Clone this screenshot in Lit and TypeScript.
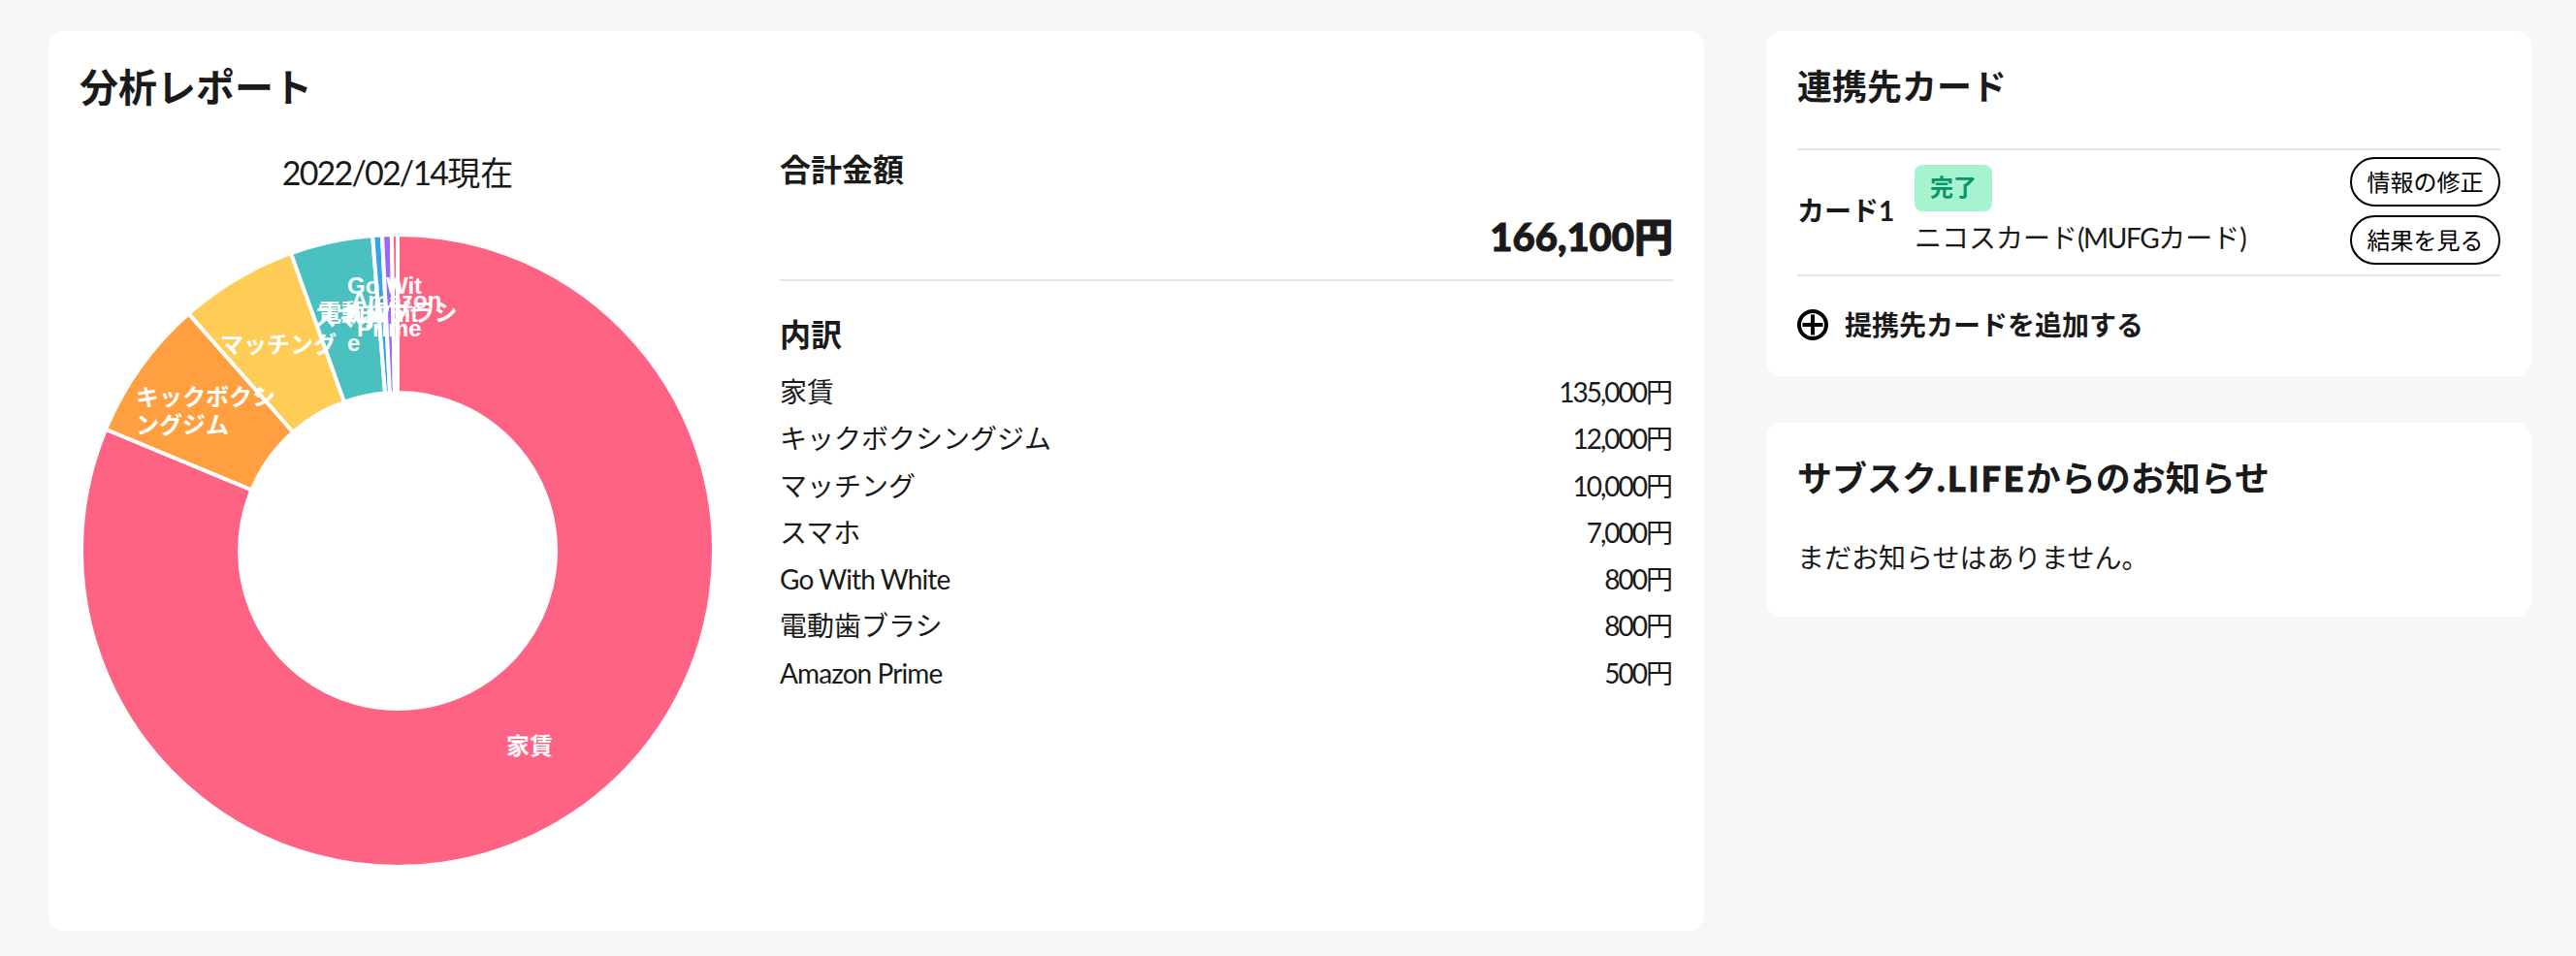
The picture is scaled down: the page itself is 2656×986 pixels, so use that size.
import { LitElement, html, css, svg } from "lit";
import { customElement } from "lit/decorators.js";

const ROWS: [string, number, boolean][] = [
  ["家賃", 135000, false],
  ["キックボクシングジム", 12000, false],
  ["マッチング", 10000, false],
  ["スマホ", 7000, false],
  ["Go With White", 800, true],
  ["電動歯ブラシ", 800, false],
  ["Amazon Prime", 500, true],
];
const COLORS = ["#ff6384", "#ff9f40", "#ffcd56", "#4bc0c0", "#36a2eb", "#9966ff", "#ff6384"];
const TOTAL = 166100;
const CX = 328, CY = 326, RO = 326, RI = 163;

function pt(r: number, a: number) {
  return [CX + r * Math.sin(a), CY - r * Math.cos(a)];
}
function slice(from: number, to: number) {
  const a0 = (from / TOTAL) * Math.PI * 2;
  const a1 = (to / TOTAL) * Math.PI * 2;
  const large = a1 - a0 > Math.PI ? 1 : 0;
  const [x0, y0] = pt(RO, a0), [x1, y1] = pt(RO, a1), [x2, y2] = pt(RI, a1), [x3, y3] = pt(RI, a0);
  return `M${x0} ${y0}A${RO} ${RO} 0 ${large} 1 ${x1} ${y1}L${x2} ${y2}A${RI} ${RI} 0 ${large} 0 ${x3} ${y3}Z`;
}

// chart label lines: [text, page x of start, page y of centre], relative to the chart box at (82,242)
const LABELS: [string, number, number][] = [
  ["家賃", 522, 769],
  ["キックボクシ", 140, 409],
  ["ングジム", 140, 438],
  ["マッチング", 227, 355],
  ["スマホ", 323, 327],
  ["Go Wit", 358, 294],
  ["h Whit", 358, 323],
  ["e", 358, 353],
  ["電動歯ブラシ", 328, 322],
  ["Amazon", 362, 309],
  ["Prime", 368, 338],
];

@customElement("app-root")
export class AppRoot extends LitElement {
  static styles = css`
    :host {
      display: block;
      min-height: 986px;
      background: #f7f7f7;
      color: #1a1a1a;
      font-family: Lato, "Noto Sans CJK JP", sans-serif;
      box-sizing: border-box;
    }
    .page {
      display: flex;
      align-items: flex-start;
      gap: 64px;
      padding: 32px 46px 26px 50px;
    }
    .card {
      background: #fff;
      border-radius: 16px;
      box-sizing: border-box;
    }
    .report {
      width: 1707px;
      height: 928px;
      padding: 0 32px;
    }
    .report h1 {
      margin: 0;
      font-size: 40px;
      line-height: 56px;
      padding-top: 30px;
      font-weight: 700;
    }
    .report-body {
      display: flex;
      gap: 66px;
    }
    .chart {
      width: 656px;
      flex: none;
    }
    .date {
      margin-top: 40px;
      height: 40px;
      line-height: 40px;
      text-align: center;
      font-size: 34px;
    }
    .date span {
      letter-spacing: -1.8px;
    }
    .chart svg {
      display: block;
      margin-top: 44px;
    }
    .chart text {
      font-family: "Liberation Sans", "Noto Sans CJK JP", sans-serif;
      font-size: 24px;
      font-weight: 700;
      fill: #fff;
      dominant-baseline: central;
    }
    .summary {
      flex: 1;
      min-width: 0;
    }
    .summary h2 {
      margin: 0;
      font-size: 32px;
      line-height: 44px;
      font-weight: 700;
    }
    .summary .sum-title {
      padding-top: 35px;
    }
    .sum-total {
      text-align: right;
      font-size: 40px;
      font-weight: 900;
      -webkit-text-stroke: 1px #1a1a1a;
      line-height: 56px;
      margin-top: 19px;
      padding-bottom: 16px;
      border-bottom: 2px solid #e5e5e5;
    }
    .summary .sum-detail {
      padding: 33px 0 13px;
    }
    .row {
      display: flex;
      justify-content: space-between;
      font-size: 28px;
      line-height: 48.3px;
    }
    .num {
      letter-spacing: -2px;
    }
    .latin {
      letter-spacing: -0.9px;
    }
    .side {
      width: 789px;
      display: flex;
      flex-direction: column;
      gap: 48px;
    }
    .side h2 {
      margin: 0;
      font-size: 36px;
      font-weight: 700;
      line-height: 50px;
    }
    .side h2 span {
      font-weight: 900;
      -webkit-text-stroke: 0.8px #1a1a1a;
      letter-spacing: 2.5px;
    }
    .link {
      height: 356px;
      padding: 32px 32px 0;
    }
    .link-list {
      margin-top: 39px;
      border-top: 2px solid #e5e5e5;
      border-bottom: 2px solid #e5e5e5;
      height: 128px;
      box-sizing: content-box;
      display: flex;
      align-items: center;
    }
    .card-name {
      width: 121px;
      flex: none;
      font-size: 28px;
      font-weight: 700;
      padding-bottom: 6px;
    }
    .card-info {
      flex: 1;
      display: flex;
      flex-direction: column;
      align-items: flex-start;
      gap: 7px;
      padding-bottom: 3px;
      font-size: 28px;
      line-height: 40px;
    }
    .card-info .latin {
      letter-spacing: -1.4px;
    }
    .badge {
      width: 80px;
      height: 48px;
      line-height: 46px;
      text-align: center;
      background: #a7f3d0;
      color: #059669;
      border-radius: 8px;
      font-size: 24px;
      font-weight: 700;
    }
    .actions {
      display: flex;
      flex-direction: column;
      gap: 9px;
      padding-bottom: 3px;
    }
    .btn {
      width: 155px;
      height: 51px;
      box-sizing: border-box;
      border: 2px solid #000;
      border-radius: 26px;
      background: #fff;
      color: #000;
      font: inherit;
      font-size: 24px;
      line-height: 1;
      padding: 0;
    }
    .add {
      display: flex;
      align-items: center;
      gap: 17px;
      margin-top: 34px;
      font-size: 28px;
      font-weight: 700;
      line-height: 32px;
    }
    .add svg {
      width: 32px;
      height: 32px;
      flex: none;
    }
    .news {
      height: 200px;
      padding: 32px;
    }
    .news p {
      margin: 37px 0 0;
      font-size: 28px;
      line-height: 40px;
    }
  `;

  private renderChart() {
    let acc = 0;
    const slices = ROWS.map(([, v], i) => {
      const d = slice(acc, acc + v);
      acc += v;
      return svg`<path d=${d} fill=${COLORS[i]} stroke="#fff" stroke-width="4"></path>`;
    });
    return html`<svg width="656" height="652" viewBox="0 0 656 652">
      ${slices}
      ${LABELS.map(([t, x, y]) => svg`<text x=${x - 82} y=${y - 242}>${t}</text>`)}
    </svg>`;
  }

  render() {
    return html`<div class="page">
      <section class="card report">
        <h1>分析レポート</h1>
        <div class="report-body">
          <div class="chart">
            <div class="date"><span>2022/02/14</span>現在</div>
            ${this.renderChart()}
          </div>
          <div class="summary">
            <h2 class="sum-title">合計金額</h2>
            <div class="sum-total">166,100円</div>
            <h2 class="sum-detail">内訳</h2>
            ${ROWS.map(
              ([n, v, latin]) => html`<div class="row">
                <span class=${latin ? "latin" : ""}>${n}</span>
                <span><span class="num">${v.toLocaleString("en-US")}</span>円</span>
              </div>`
            )}
          </div>
        </div>
      </section>
      <div class="side">
        <section class="card link">
          <h2>連携先カード</h2>
          <div class="link-list">
            <div class="card-name">カード1</div>
            <div class="card-info">
              <span class="badge">完了</span>
              <span>ニコスカード<span class="latin">(MUFG</span>カード)</span>
            </div>
            <div class="actions">
              <button class="btn">情報の修正</button>
              <button class="btn">結果を見る</button>
            </div>
          </div>
          <div class="add">
            <svg viewBox="0 0 32 32" fill="none" stroke="#000" stroke-width="4">
              <circle cx="16" cy="16" r="14"></circle>
              <path d="M16 5.5v21M5.5 16h21"></path>
            </svg>
            <span>提携先カードを追加する</span>
          </div>
        </section>
        <section class="card news">
          <h2>サブスク<span>.LIFE</span>からのお知らせ</h2>
          <p>まだお知らせはありません。</p>
        </section>
      </div>
    </div>`;
  }
}
